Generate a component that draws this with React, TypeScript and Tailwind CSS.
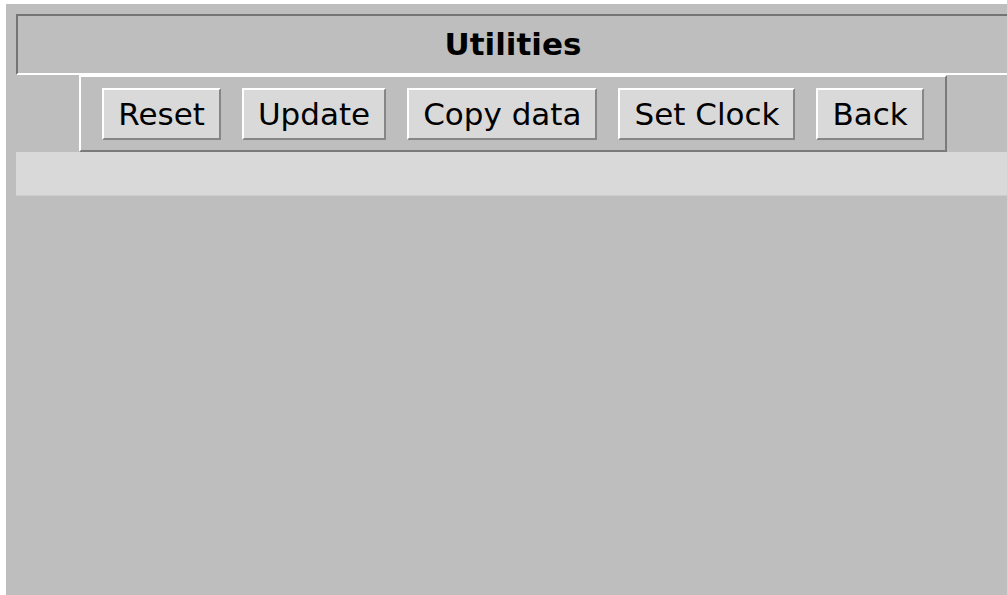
const buttons = ["Reset", "Update", "Copy data", "Set Clock", "Back"];

function ToolButton({ label }: { label: string }) {
  return (
    <button className="h-[52px] px-[14px] bg-[#d9d9d9] border-2 border-t-white border-l-white border-b-[#868686] border-r-[#868686] text-black text-[31px] leading-none flex items-center pt-[2px]">
      {label}
    </button>
  );
}

export default function App() {
  return (
    <main
      className="w-screen h-screen overflow-hidden bg-white pl-[6px] pt-[4px]"
      style={{ fontFamily: '"DejaVu Sans", sans-serif' }}
    >
      <div className="w-[1014px] h-full bg-[#bebebe] p-[10px] flex flex-col">
        <div className="h-[61px] border-2 border-t-[#747474] border-l-[#747474] border-b-white border-r-white flex items-center justify-center">
          <h1 className="text-[31px] font-bold leading-none text-black">Utilities</h1>
        </div>
        <div className="mx-auto w-[868px] h-[77px] border-2 border-t-white border-l-white border-b-[#7a7a7a] border-r-[#7a7a7a] flex items-center justify-center gap-[21px]">
          {buttons.map((b) => (
            <ToolButton key={b} label={b} />
          ))}
        </div>
        <div className="h-[44px] bg-[#d9d9d9] border-b border-[#cdcdcd]" />
      </div>
    </main>
  );
}
